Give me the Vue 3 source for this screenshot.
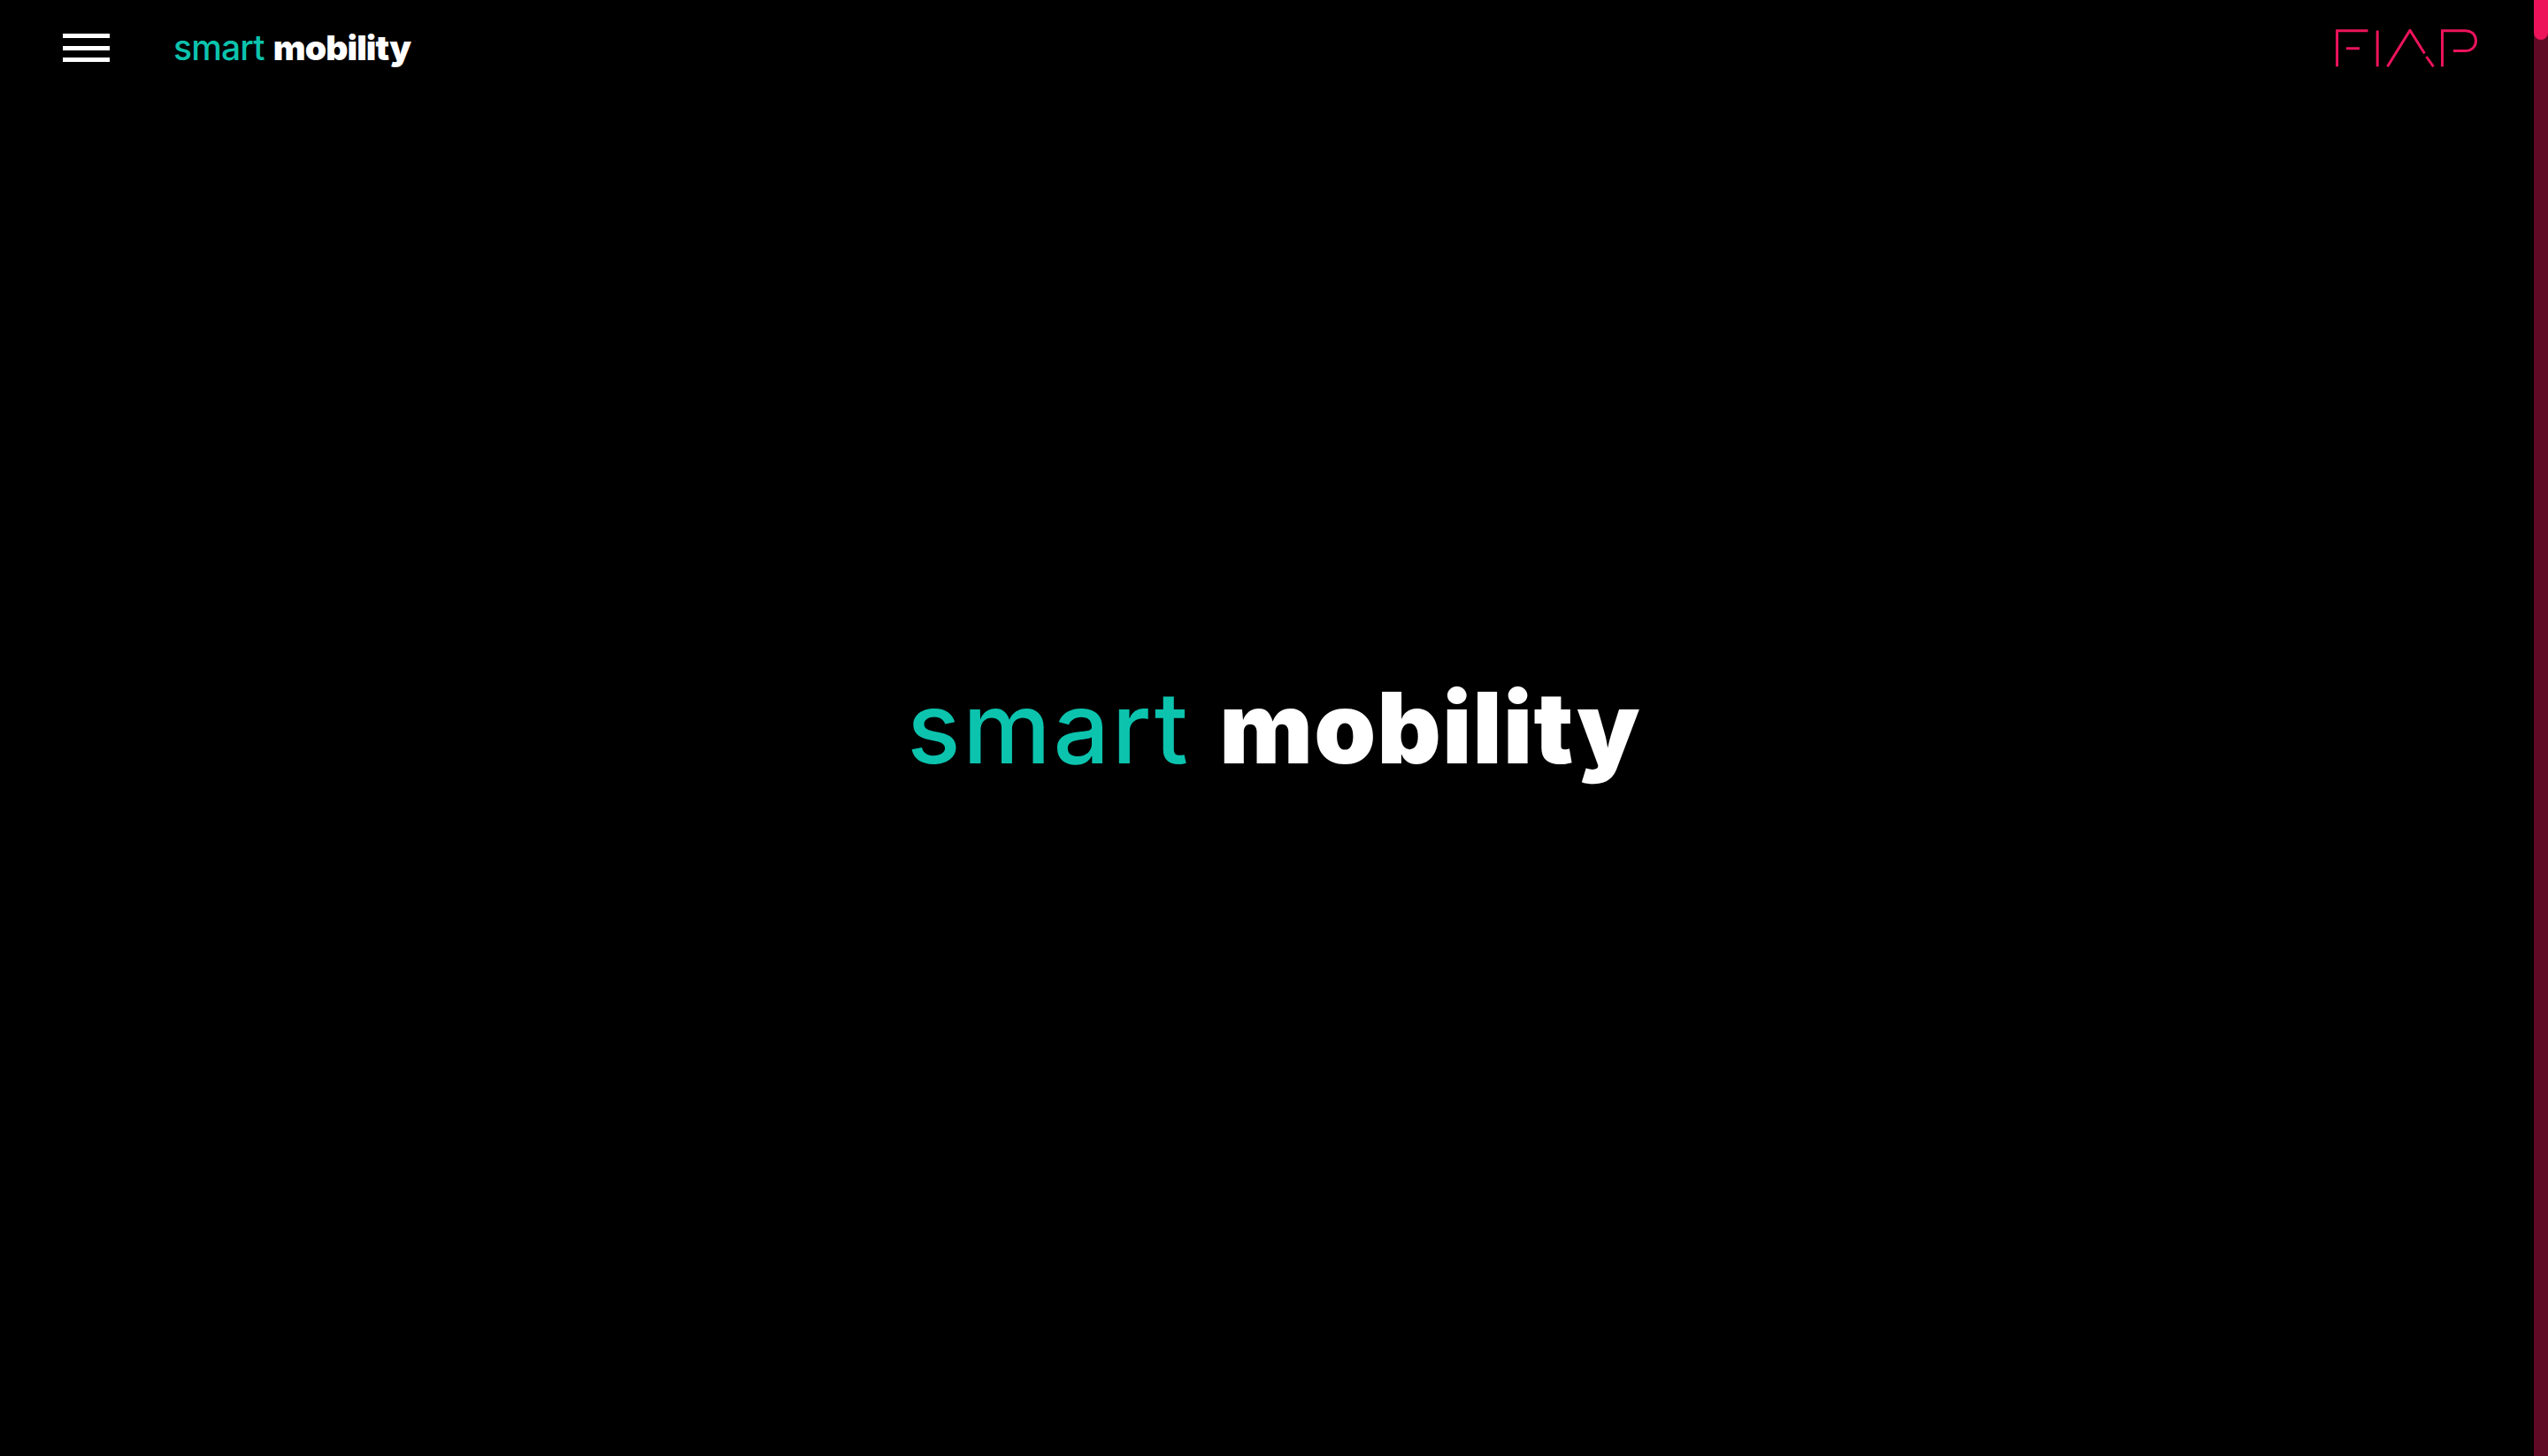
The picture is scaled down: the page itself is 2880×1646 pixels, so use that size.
<script setup>
const wordA = 'smart'
const wordB = 'mobility'
</script>

<template>
  <div class="page">
    <div class="content">
      <header class="topbar">
        <button class="burger" aria-label="Menu">
          <span class="bar"></span>
          <span class="bar"></span>
          <span class="bar"></span>
        </button>
        <div class="brand">
          <span class="light">{{ wordA }}</span> <span class="bold">{{ wordB }}</span>
        </div>
        <svg class="fiap" viewBox="0 0 160 43" width="160" height="43" fill="none" stroke="#ed145b" stroke-width="3">
          <path d="M1.600 42.300V1.700H36.500M12 21.800H27" />
          <path d="M47.200 1.500V42.300" />
          <path d="M58.500 42.300L84 1.200L100.500 27.500M102.500 31L110.500 42.300" />
          <path d="M120.500 42.300V1.700H146C154 1.700 158.500 6.500 158.500 13C158.500 19.500 154 24.600 146 24.600H133" />
        </svg>
      </header>
      <main class="hero">
        <h1 class="title"><span class="light">{{ wordA }}</span> <span class="bold">{{ wordB }}</span></h1>
      </main>
    </div>
    <div class="track"><div class="thumb"></div></div>
  </div>
</template>

<style scoped>
.page {
  display: flex;
  width: 2880px;
  height: 1646px;
  background: #000;
  overflow: hidden;
  font-family: Inter, "Liberation Sans", sans-serif;
}
.content {
  flex: 1;
  display: flex;
  flex-direction: column;
  min-width: 0;
}
.topbar {
  display: flex;
  align-items: center;
  height: 108px;
  padding: 0 64px 0 71px;
}
.burger {
  display: flex;
  flex-direction: column;
  gap: 8.5px;
  width: 53px;
  padding: 0;
  background: none;
  border: 0;
}
.bar {
  display: block;
  height: 5px;
  background: #fff;
}
.brand {
  margin-left: 72px;
  margin-bottom: 2px;
  font-size: 39px;
  line-height: 1;
  color: #fff;
  white-space: nowrap;
  letter-spacing: -0.85px;
}
.fiap {
  margin-left: auto;
}
.light {
  color: #0cc3ae;
  font-weight: 550;
}
.bold {
  color: #fff;
  font-weight: 900;
}
.hero {
  flex: 1;
  display: flex;
  justify-content: center;
  padding-top: 658px;
  padding-left: 16px;
}
.title {
  margin: 0;
  font-size: 112px;
  line-height: 1;
  font-weight: 400;
  white-space: nowrap;
  letter-spacing: 1.3px;
}
.title .light {
  letter-spacing: 2.7px;
}
.track {
  width: 16px;
  background: #610a26;
}
.thumb {
  height: 45px;
  background: #ed145b;
  border-radius: 0 0 8px 8px;
}
</style>
